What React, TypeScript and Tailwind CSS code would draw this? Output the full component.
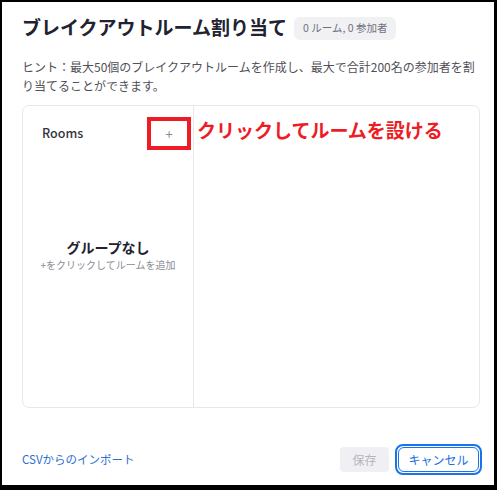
export default function App() {
  const font = { fontFamily: '"Noto Sans CJK JP", "Noto Sans", sans-serif' };

  return (
    <div className="w-[497px] h-[490px] bg-black pt-[2px] pl-[2px] pr-[3px] pb-[5px]" style={font}>
      <div className="w-full h-full bg-white flex flex-col pl-5 pr-[14px] pt-[10px] pb-[10px]">
        {/* header */}
        <div className="flex items-center gap-[7px] h-[28px]">
          <h1 className="text-[19px] font-bold text-[#222230] leading-none">
            ブレイクアウトルーム割り当て
          </h1>
          <span className="mt-[4px] bg-[#f1f1f4] rounded-[6px] px-[9px] h-[23px] flex items-center text-[10.5px] text-[#6e7080]">
            0 ルーム, 0 参加者
          </span>
        </div>

        <p className="mt-[17px] text-[12px] leading-[19px] text-[#505058]">
          ヒント：最大50個のブレイクアウトルームを作成し、最大で合計200名の参加者を割り当てることができます。
        </p>

        {/* rooms panel */}
        <div className="mt-[10px] h-[303px] border border-[#e8e8ec] rounded-[7px] flex">
          <div className="w-[171px] border-r border-[#e8e8ec] flex flex-col">
            <div className="flex items-center h-[33px] mt-[11px]">
              <span className="ml-[19px] text-[12.5px] font-medium text-[#333340]">Rooms</span>
              <div className="ml-auto mr-[2px] w-[44px] h-[33px] border-[4px] border-[#ee1c25] flex items-center justify-center text-[#8a8a96] text-[13px] leading-none">
                +
              </div>
            </div>
            <div className="flex flex-col items-center mt-[87px]">
              <span className="text-[14px] font-bold text-[#222230] leading-[20px]">グループなし</span>
              <span className="text-[10px] text-[#8c8c96] leading-[16px]">+をクリックしてルームを追加</span>
            </div>
          </div>
          <div className="flex-1">
            <div className="pl-[3px] mt-[12px] text-[19px] font-bold text-[#ee1c25] leading-[24px]">
              クリックしてルームを設ける
            </div>
          </div>
        </div>

        {/* footer */}
        <div className="mt-auto flex items-center">
          <span className="text-[11.5px] text-[#2d6fd0]">CSVからのインポート</span>
          <div className="ml-auto flex items-center gap-[6px] mr-[-2px]">
            <button className="w-[49px] h-[25px] rounded-[4px] bg-[#f0f0f4] text-[12px] text-[#b4b4bc]">保存</button>
            <button className="w-[87px] h-[31px] rounded-[8px] border-[2px] border-[#1a73e8] p-[1px]">
              <span className="w-full h-full rounded-[6px] border-[1.5px] border-[#1a73e8] flex items-center justify-center text-[12px] text-[#1a6fe0]">
                キャンセル
              </span>
            </button>
          </div>
        </div>
      </div>
    </div>
  );
}
